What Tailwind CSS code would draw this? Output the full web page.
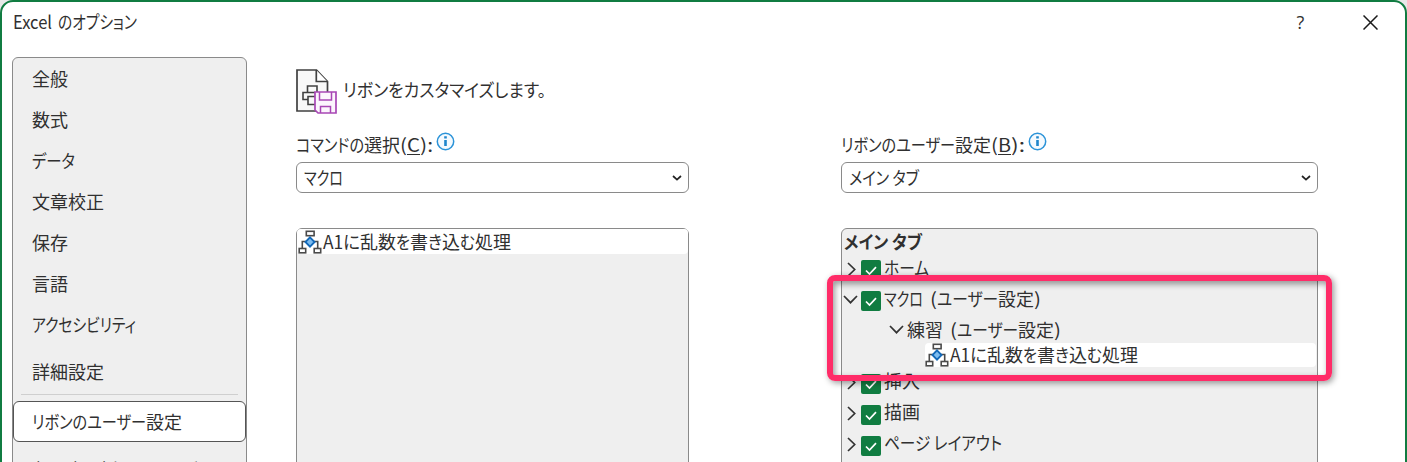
<!DOCTYPE html>
<html lang="ja"><head><meta charset="utf-8"><title>Excel のオプション</title>
<script src="https://cdn.jsdelivr.net/npm/@tailwindcss/browser@4"></script></head>
<body class="h-[462px] w-[1407px] overflow-hidden bg-[#e8e8e8] font-['Noto_Sans_CJK_JP',sans-serif] text-[18px] leading-[26px] font-normal text-[#303030] [font-feature-settings:'palt']">
<svg class="hidden">
<symbol id="flow" viewBox="0 0 24 24"><g fill="#fff" stroke="#4a4a4a" stroke-width="1.6"><path d="M4.3 18.5V11.5h15.4v7" fill="none"/><rect x="8.3" y="1.3" width="7.8" height="4.4"/><rect x="1.2" y="18.5" width="6.5" height="4.3"/><rect x="16.2" y="18.5" width="6.5" height="4.3"/></g><path d="M12 7.3 16.6 12 12 16.7 7.4 12Z" fill="#7cbcf0" stroke="#1268b8" stroke-width="1.8"/></symbol>
<symbol id="info" viewBox="0 0 19 19"><circle cx="9.5" cy="9.5" r="8.2" fill="#f5fafe" stroke="#2b93d8" stroke-width="1.5"/><path d="M9.5 4.2v2.3M9.5 8v6" stroke="#1f86cc" stroke-width="2.6"/></symbol>
<symbol id="down" viewBox="0 0 10 6"><path d="m1 1 4 3.6L9 1" fill="none" stroke="#222" stroke-width="1.7"/></symbol>
<symbol id="right" viewBox="0 0 9 15"><path d="m1 1 6.7 6.5L1 14" fill="none" stroke="#333" stroke-width="1.7"/></symbol>
<symbol id="open" viewBox="0 0 15 9"><path d="m1 1 6.5 6.7L14 1" fill="none" stroke="#333" stroke-width="1.7"/></symbol>
<symbol id="check" viewBox="0 0 20 20"><rect width="20" height="20" rx="2" fill="#107c41"/><path d="m5 10.500 3.500 3.500L15 7.200" fill="none" stroke="#fff" stroke-width="1.7"/></symbol>
</svg>
<main class="flex h-[480px] flex-col rounded-[13px] border-2 border-[#107c41] bg-white">
<header class="flex h-[55px] shrink-0 items-start pt-[7px] pl-[11px]">
<span class="flex grow gap-[6px]"><span data-w="39">Excel</span><span data-w="79">のオプション</span></span>
<span class="w-[9px] text-center font-['Open_Sans',sans-serif]">?</span>
<svg class="mt-[6px] mr-[27px] ml-[58px] size-[15px]" viewBox="0 0 15 15"><path d="m.5.5 14 14M14.5.5l-14 14" stroke="#1a1a1a" stroke-width="1.5"/></svg>
</header>
<div class="flex grow items-stretch">
<nav class="ml-[10px] flex w-[235px] flex-col rounded-t-[6px] border border-[#8a8a8a] bg-[#efefef]">
<div class="flex flex-col gap-[15px] pt-[8px] pl-[19px]">
<span data-w="36">全般</span><span data-w="36">数式</span><span data-w="43">データ</span><span data-w="72">文章校正</span><span data-w="36">保存</span><span data-w="36">言語</span><span data-w="104">アクセシビリティ</span></div>
<div class="mt-[21px] pl-[19px]"><span data-w="72">詳細設定</span></div>
<div class="mx-[8px] mt-[9px] h-px shrink-0 bg-[#cfcfcf]"></div>
<div class="mt-[6px] flex h-[41px] w-[233px] shrink-0 items-center rounded-[6px] border border-[#555] bg-white pl-[18px]"><span class="flex"><span data-w="114">リボンのユーザー</span><span data-w="36">設定</span></span></div>
<div class="mt-[14px] pl-[19px]"><span data-w="180">クイック アクセス ツール バー</span></div>
</nav>
<section class="ml-[49px] flex w-[393px] shrink-0 flex-col">
<div class="flex h-[71px] pt-[12px]">
<svg class="h-[46px] w-[42px]" viewBox="0 0 42 46"><path d="M1 1h19.500l11 11.500v29.500H1Z" fill="#f8f8f8" stroke="#404040" stroke-width="1.7"/><path d="M20.300 1v11.500h11" fill="#fff" stroke="#404040" stroke-width="1.7"/><path d="M11.500 23.500v-6.500h9.500v7M19 23.500H7v7h5v5h8M12 30.500v-3h7" fill="none" stroke="#404040" stroke-width="1.600"/><path d="M19 23h21v21H22l-3-3Z" fill="#fcf5fd" stroke="#a847b5" stroke-width="1.700"/><path d="M23.500 23v8h12v-8M24.500 44v-6.500h10V44" fill="none" stroke="#a847b5" stroke-width="1.500"/></svg>
<span class="mt-[8px] ml-[5px]"><span data-w="203">リボンをカスタマイズします。</span></span></div>
<div class="flex h-[34px] items-start pt-[4px]"><span class="flex"><span data-w="68">コマンドの</span><span data-w="36">選択</span><span data-w="7">(</span><span data-w="13" class="underline">C</span><span data-w="13">):</span></span><svg class="ml-[3px] size-[19px]"><use href="#info"/></svg></div>
<div class="flex h-[31px] items-center justify-between rounded-[6px] border border-[#8a8a8a] pr-[6px] pl-[7px]"><span data-w="39">マクロ</span><svg class="h-[6px] w-[10px]"><use href="#down"/></svg></div>
<div class="mt-[35px] grow rounded-t-[6px] border border-[#8a8a8a] bg-[#efefef]"><div class="flex h-[25px] items-center rounded-[4px] bg-white pl-px"><svg class="size-[24px]"><use href="#flow"/></svg><span class="ml-[1px] flex"><span data-w="37">A1に</span><span data-w="36">乱数</span><span data-w="14">を</span><span data-w="18">書</span><span data-w="14">き</span><span data-w="18">込</span><span data-w="15">む</span><span data-w="36">処理</span></span></div></div>
</section>
<section class="ml-[152px] flex w-[477px] shrink-0 flex-col pt-[71px]">
<div class="flex h-[34px] items-start pt-[4px]"><span class="flex"><span data-w="114">リボンのユーザー</span><span data-w="36">設定</span><span data-w="7">(</span><span data-w="13" class="underline">B</span><span data-w="14">):</span></span><svg class="ml-[3px] size-[19px]"><use href="#info"/></svg></div>
<div class="flex h-[31px] items-center justify-between rounded-[6px] border border-[#8a8a8a] pr-[6px] pl-[7px]"><span data-w="70">メイン タブ</span><svg class="h-[6px] w-[10px]"><use href="#down"/></svg></div>
<div class="relative mt-[35px] grow rounded-t-[6px] border border-[#8a8a8a] bg-[#efefef]">
<div class="h-[26px] pl-[2px] font-bold"><span data-w="78">メイン タブ</span></div>
<div class="flex h-[28px] items-start pl-[5px]"><svg class="mt-[7px] mr-[5px] h-[15px] w-[9px]"><use href="#right"/></svg><svg class="mt-[5px] mr-[3px] size-[20px]"><use href="#check"/></svg><span data-w="45">ホーム</span></div>
<div class="flex h-[31px] items-start pt-[3px] pl-[1px]"><svg class="mt-[9px] mr-[3px] h-[9px] w-[15px]"><use href="#open"/></svg><svg class="mt-[5px] mr-[3px] size-[20px]"><use href="#check"/></svg><span class="flex"><span data-w="39">マクロ</span><span data-w="7" class="ml-[7px]">(</span><span data-w="61">ユーザー</span><span data-w="36">設定</span><span data-w="7">)</span></span></div>
<div class="flex h-[29px] items-start pt-[3px] pl-[47px]"><svg class="mt-[8px] mr-[3px] h-[9px] w-[15px]"><use href="#open"/></svg><span class="flex"><span data-w="36">練習</span><span data-w="7" class="ml-[7px]">(</span><span data-w="61">ユーザー</span><span data-w="36">設定</span><span data-w="7">)</span></span></div>
<div class="mr-px ml-[83px] flex h-[24px] items-center rounded-[4px] bg-white"><svg class="size-[24px]"><use href="#flow"/></svg><span class="ml-[1px] flex"><span data-w="37">A1に</span><span data-w="36">乱数</span><span data-w="14">を</span><span data-w="18">書</span><span data-w="14">き</span><span data-w="18">込</span><span data-w="15">む</span><span data-w="36">処理</span></span></div>
<div class="flex h-[31px] items-start pt-[1px] pl-[5px]"><svg class="mt-[7px] mr-[5px] h-[15px] w-[9px]"><use href="#right"/></svg><svg class="mt-[6px] mr-[3px] size-[20px]"><use href="#check"/></svg><span data-w="36">挿入</span></div>
<div class="flex h-[31px] items-start pt-[1px] pl-[5px]"><svg class="mt-[7px] mr-[5px] h-[15px] w-[9px]"><use href="#right"/></svg><svg class="mt-[6px] mr-[3px] size-[20px]"><use href="#check"/></svg><span data-w="36">描画</span></div>
<div class="flex h-[31px] items-start pt-[1px] pl-[5px]"><svg class="mt-[7px] mr-[5px] h-[15px] w-[9px]"><use href="#right"/></svg><svg class="mt-[6px] mr-[3px] size-[20px]"><use href="#check"/></svg><span data-w="118">ページ レイアウト</span></div>
<div class="absolute top-[46px] -left-[15px] h-[106px] w-[505px] rounded-[8px] border-6 border-[#ff2c68] shadow-[2px_2px_6px_rgba(0,0,0,.4),inset_2px_3px_6px_rgba(0,0,0,.4)]"></div>
</div>
</section>
</div>
</main>
<script>
// Condense each text run to its column width, again whenever its natural width changes.
const fit=new ResizeObserver(list=>list.forEach(({target:s,contentRect:r})=>{
  if(r.width)s.style.transform='translate(0,-1px) scaleX('+s.parentNode.dataset.w/r.width+')';
}));
document.querySelectorAll('[data-w]').forEach(e=>{
  const s=document.createElement('span');
  s.style.cssText='display:inline-block;white-space:nowrap;transform-origin:left;';
  while(e.firstChild)s.appendChild(e.firstChild);
  e.appendChild(s);
  e.style.cssText='display:block;height:26px;flex:none;width:'+e.dataset.w+'px';
  if(e.classList.contains('underline')){s.style.textDecoration='underline';s.style.textUnderlineOffset='2px';}
  fit.observe(s);
});
</script>
</body></html>
